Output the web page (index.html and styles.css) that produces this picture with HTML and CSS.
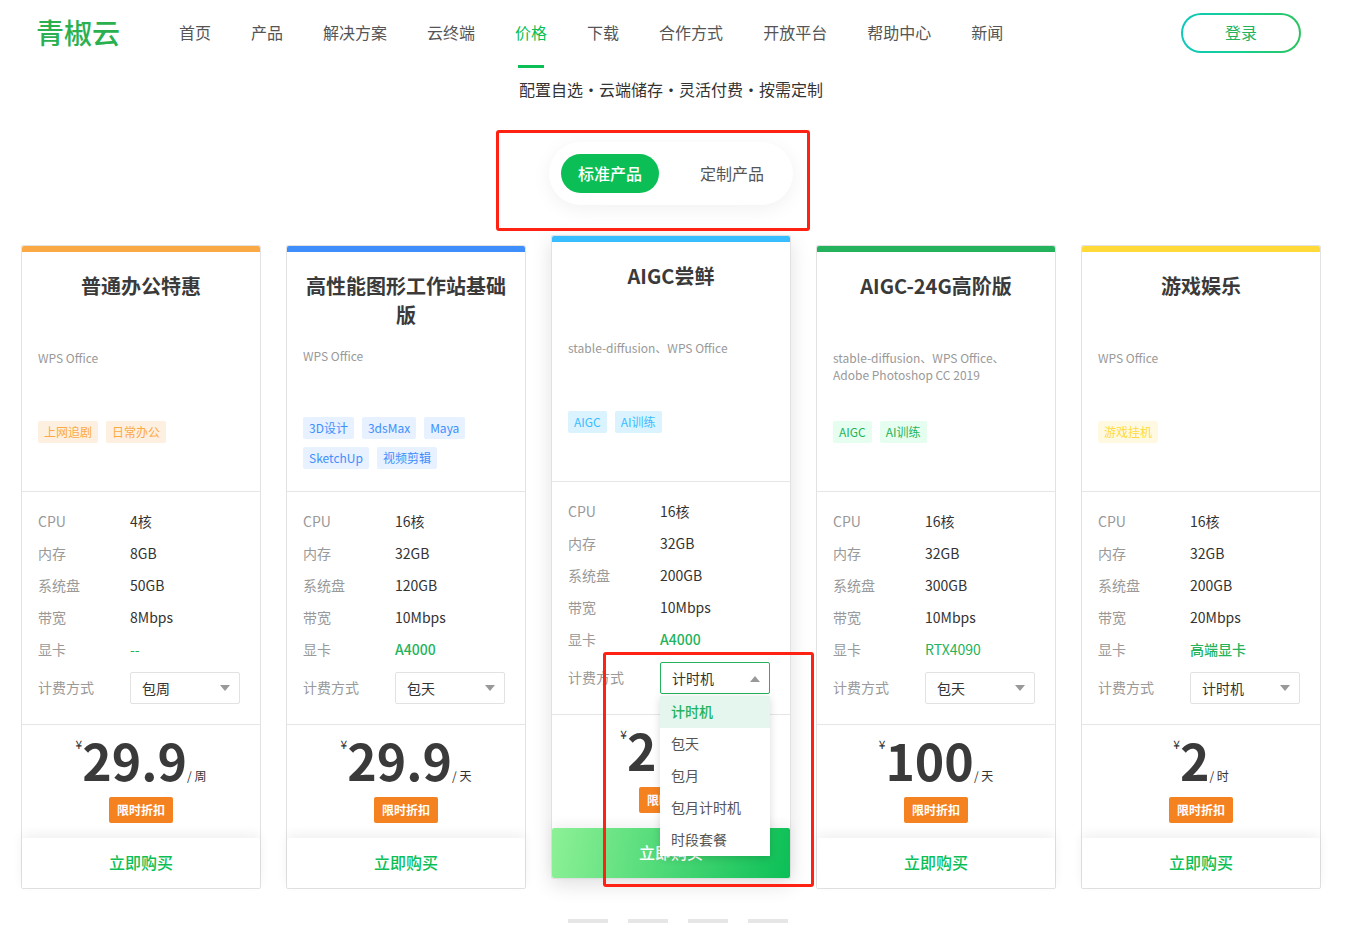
FILE: index.html
```html
<!DOCTYPE html>
<html lang="zh-CN">
<head>
<meta charset="utf-8">
<meta name="viewport" content="width=device-width, initial-scale=1">
<title>青椒云 - 价格</title>
<link rel="stylesheet" href="styles.css">
</head>
<body>
<header class="header">
  <a class="logo" href="#">青椒云</a>
  <nav class="nav">
    <a class="nav-link" href="#">首页</a>
    <a class="nav-link" href="#">产品</a>
    <a class="nav-link" href="#">解决方案</a>
    <a class="nav-link" href="#">云终端</a>
    <a class="nav-link nav-link--active" href="#">价格</a>
    <a class="nav-link" href="#">下载</a>
    <a class="nav-link" href="#">合作方式</a>
    <a class="nav-link" href="#">开放平台</a>
    <a class="nav-link" href="#">帮助中心</a>
    <a class="nav-link" href="#">新闻</a>
  </nav>
  <a class="login" href="#">登录</a>
</header>
<main class="main">
  <p class="subtitle">配置自选・云端储存・灵活付费・按需定制</p>
  <div class="switch-row">
    <div class="switch">
      <button class="switch-btn switch-btn--on" type="button">标准产品</button>
      <button class="switch-btn" type="button">定制产品</button>
      <span class="marker marker--switch"></span>
    </div>
  </div>

  <section class="cards">
    <article class="card card--orange">
      <div class="card-head">
        <h2 class="card-title">普通办公特惠</h2>
        <p class="card-desc">WPS Office</p>
        <div class="tags"><span class="tag">上网追剧</span><span class="tag">日常办公</span></div>
      </div>
      <div class="specs">
        <dl class="spec-list">
          <dt>CPU</dt><dd>4核</dd>
          <dt>内存</dt><dd>8GB</dd>
          <dt>系统盘</dt><dd>50GB</dd>
          <dt>带宽</dt><dd>8Mbps</dd>
          <dt>显卡</dt><dd class="gpu">--</dd>
        </dl>
        <div class="billing">
          <label class="billing-label" for="bill-1">计费方式</label>
          <div class="picker"><select class="picker-select" id="bill-1"><option>包周</option></select></div>
        </div>
      </div>
      <div class="price-box">
        <div class="price"><span class="currency">¥</span><strong class="amount">29.9</strong><span class="unit">/ 周</span></div>
        <span class="discount">限时折扣</span>
      </div>
      <button class="buy" type="button">立即购买</button>
    </article>

    <article class="card card--blue card--long">
      <div class="card-head">
        <h2 class="card-title">高性能图形工作站基础版</h2>
        <p class="card-desc">WPS Office</p>
        <div class="tags"><span class="tag">3D设计</span><span class="tag">3dsMax</span><span class="tag">Maya</span><span class="tag">SketchUp</span><span class="tag">视频剪辑</span></div>
      </div>
      <div class="specs">
        <dl class="spec-list">
          <dt>CPU</dt><dd>16核</dd>
          <dt>内存</dt><dd>32GB</dd>
          <dt>系统盘</dt><dd>120GB</dd>
          <dt>带宽</dt><dd>10Mbps</dd>
          <dt>显卡</dt><dd class="gpu gpu--strong">A4000</dd>
        </dl>
        <div class="billing">
          <label class="billing-label" for="bill-2">计费方式</label>
          <div class="picker"><select class="picker-select" id="bill-2"><option>包天</option></select></div>
        </div>
      </div>
      <div class="price-box">
        <div class="price"><span class="currency">¥</span><strong class="amount">29.9</strong><span class="unit">/ 天</span></div>
        <span class="discount">限时折扣</span>
      </div>
      <button class="buy" type="button">立即购买</button>
    </article>

    <article class="card card--sky card--raised">
      <div class="card-head">
        <h2 class="card-title">AIGC尝鲜</h2>
        <p class="card-desc">stable-diffusion、WPS Office</p>
        <div class="tags"><span class="tag">AIGC</span><span class="tag">AI训练</span></div>
      </div>
      <div class="specs">
        <dl class="spec-list">
          <dt>CPU</dt><dd>16核</dd>
          <dt>内存</dt><dd>32GB</dd>
          <dt>系统盘</dt><dd>200GB</dd>
          <dt>带宽</dt><dd>10Mbps</dd>
          <dt>显卡</dt><dd class="gpu gpu--strong">A4000</dd>
        </dl>
        <div class="billing">
          <label class="billing-label" for="bill-3">计费方式</label>
          <div class="picker picker--open">
            <select class="picker-select" id="bill-3"><option>计时机</option></select>
            <ul class="menu">
              <li class="menu-item menu-item--on">计时机</li>
              <li class="menu-item">包天</li>
              <li class="menu-item">包月</li>
              <li class="menu-item">包月计时机</li>
              <li class="menu-item">时段套餐</li>
            </ul>
          </div>
        </div>
      </div>
      <div class="price-box">
        <div class="price"><span class="currency">¥</span><strong class="amount">2.5</strong><span class="unit">/ 时</span></div>
        <span class="discount">限时折扣</span>
      </div>
      <button class="buy" type="button">立即购买</button>
      <span class="marker marker--menu"></span>
    </article>

    <article class="card card--green">
      <div class="card-head">
        <h2 class="card-title">AIGC-24G高阶版</h2>
        <p class="card-desc">stable-diffusion、WPS Office、Adobe Photoshop CC 2019</p>
        <div class="tags"><span class="tag">AIGC</span><span class="tag">AI训练</span></div>
      </div>
      <div class="specs">
        <dl class="spec-list">
          <dt>CPU</dt><dd>16核</dd>
          <dt>内存</dt><dd>32GB</dd>
          <dt>系统盘</dt><dd>300GB</dd>
          <dt>带宽</dt><dd>10Mbps</dd>
          <dt>显卡</dt><dd class="gpu">RTX4090</dd>
        </dl>
        <div class="billing">
          <label class="billing-label" for="bill-4">计费方式</label>
          <div class="picker"><select class="picker-select" id="bill-4"><option>包天</option></select></div>
        </div>
      </div>
      <div class="price-box">
        <div class="price"><span class="currency">¥</span><strong class="amount">100</strong><span class="unit">/ 天</span></div>
        <span class="discount">限时折扣</span>
      </div>
      <button class="buy" type="button">立即购买</button>
    </article>

    <article class="card card--yellow">
      <div class="card-head">
        <h2 class="card-title">游戏娱乐</h2>
        <p class="card-desc">WPS Office</p>
        <div class="tags"><span class="tag">游戏挂机</span></div>
      </div>
      <div class="specs">
        <dl class="spec-list">
          <dt>CPU</dt><dd>16核</dd>
          <dt>内存</dt><dd>32GB</dd>
          <dt>系统盘</dt><dd>200GB</dd>
          <dt>带宽</dt><dd>20Mbps</dd>
          <dt>显卡</dt><dd class="gpu gpu--strong">高端显卡</dd>
        </dl>
        <div class="billing">
          <label class="billing-label" for="bill-5">计费方式</label>
          <div class="picker"><select class="picker-select" id="bill-5"><option>计时机</option></select></div>
        </div>
      </div>
      <div class="price-box">
        <div class="price"><span class="currency">¥</span><strong class="amount">2</strong><span class="unit">/ 时</span></div>
        <span class="discount">限时折扣</span>
      </div>
      <button class="buy" type="button">立即购买</button>
    </article>
  </section>

  <div class="pager"><span class="dash"></span><span class="dash"></span><span class="dash"></span><span class="dash"></span></div>
</main>
</body>
</html>
```
FILE: styles.css
```css
* {
  box-sizing: border-box;
}

body {
  margin: 0;
  background: #fff;
  color: #333;
  font-family: "Noto Sans CJK SC", sans-serif;
  font-size: 14px;
}

h2, p, dl, dd, ul {
  margin: 0;
  padding: 0;
}

button, select {
  font-family: inherit;
  cursor: pointer;
}

a {
  text-decoration: none;
}

/* Header */
.header {
  display: flex;
  align-items: flex-start;
  height: 66px;
  padding: 0 45px 0 36px;
}

.logo {
  color: #2bb050;
  font-size: 28px;
  font-weight: 500;
  line-height: 64px;
}

.nav {
  display: flex;
  gap: 40px;
  margin-left: 59px;
}

.nav-link {
  position: relative;
  color: #555;
  font-size: 16px;
  line-height: 64px;
  white-space: nowrap;
}

.nav-link--active {
  color: #0bbf56;
}

.nav-link--active::after {
  content: "";
  position: absolute;
  left: 3px;
  right: 3px;
  bottom: -4px;
  height: 3px;
  background: #0bbf56;
}

.login {
  width: 120px;
  margin-top: 13px;
  margin-left: auto;
  padding-bottom: 2px;
  border: 2px solid transparent;
  border-radius: 20px;
  background: linear-gradient(#fff, #fff) padding-box,
    linear-gradient(90deg, #10c8bb, #16cf91 50%, #2bc35f) border-box;
  color: #24b35c;
  font-size: 16px;
  line-height: 34px;
  text-align: center;
}

/* Intro */
.main {
  padding: 11px 25px 15px 21px;
}

.subtitle {
  font-size: 16px;
  line-height: 24px;
  text-align: center;
}

.switch-row {
  display: flex;
  justify-content: center;
  padding: 41px 0 40px;
}

.switch {
  position: relative;
  display: flex;
  gap: 24px;
  padding: 12px;
  border-radius: 32px;
  background: #fff;
  box-shadow: 0 4px 20px rgba(0, 0, 0, 0.06);
}

.switch-btn {
  width: 98px;
  height: 39px;
  padding: 0 0 2px;
  border: 0;
  border-radius: 20px;
  background: none;
  color: #555;
  font-size: 16px;
}

.switch-btn--on {
  background: #0bbf56;
  color: #fff;
  font-weight: 500;
}

.marker {
  position: absolute;
  z-index: 3;
  border: 3px solid #ff2213;
  border-radius: 3px;
  pointer-events: none;
}

.marker--switch {
  top: -12px;
  right: -17px;
  bottom: -26px;
  left: -53px;
}

.marker--menu {
  top: 416px;
  right: -24px;
  bottom: -9px;
  left: 51px;
}

/* Cards */
.cards {
  display: grid;
  grid-template-columns: repeat(5, minmax(0, 1fr));
  gap: 25px;
}

.card {
  --accent: #fba944;
  --tint: #fef0e1;
  position: relative;
  display: flex;
  flex-direction: column;
  border: 1px solid #e2e2e2;
  border-radius: 2px;
  background: #fff;
}

.card--blue {
  --accent: #3e8ffc;
  --tint: #e7f1ff;
}

.card--sky {
  --accent: #38bdff;
  --tint: #daf3ff;
}

.card--green {
  --accent: #24b35c;
  --tint: #e5fef0;
}

.card--yellow {
  --accent: #ffda38;
  --tint: #fff9e2;
}

.card--raised {
  z-index: 2;
  margin: -10px 0 10px;
  box-shadow: 0 6px 20px rgba(0, 0, 0, 0.12);
}

.card-head {
  min-height: 246px;
  padding: 19px 16px;
  border-top: 6px solid var(--accent);
  border-bottom: 1px solid #e6e6e6;
  border-radius: 2px 2px 0 0;
}

.card-title {
  min-height: 58px;
  margin-bottom: 20px;
  color: #3a3a3a;
  font-size: 20px;
  font-weight: 700;
  line-height: 29px;
  text-align: center;
}

.card-desc {
  min-height: 72px;
  color: #999;
  font-size: 12px;
  line-height: 17px;
}

.card--long .card-title {
  margin-bottom: 18px;
}

.card--long .card-desc {
  min-height: 70px;
}

.tags {
  display: flex;
  flex-wrap: wrap;
  gap: 8px;
}

.tag {
  padding: 0 6px;
  border-radius: 2px;
  background: var(--tint);
  color: var(--accent);
  font-size: 12px;
  line-height: 22px;
}

.specs {
  padding: 13px 16px 20px;
  border-bottom: 1px solid #e6e6e6;
}

.spec-list {
  display: grid;
  grid-template-columns: 92px 1fr;
  line-height: 32px;
}

.spec-list dt,
.billing-label {
  color: #999;
}

.gpu {
  color: #24b35c;
}

.gpu--strong {
  font-weight: 500;
}

.billing {
  display: flex;
  margin-top: 7px;
  line-height: 30px;
}

.billing-label {
  width: 92px;
}

.picker {
  position: relative;
  width: 110px;
}

.picker::after {
  content: "";
  position: absolute;
  top: 13px;
  right: 10px;
  border: 5px solid transparent;
  border-top: 6px solid #999;
  border-bottom: 0;
  pointer-events: none;
}

.picker-select {
  display: block;
  width: 100%;
  height: 32px;
  padding: 0 11px;
  border: 1px solid #e2e2e2;
  border-radius: 2px;
  background: #fff;
  color: #333;
  font-size: 14px;
  appearance: none;
}

.picker--open .picker-select {
  border-color: #24b35c;
}

.picker--open::after {
  top: 14px;
  border-top: 0;
  border-bottom: 6px solid #999;
}

.menu {
  position: absolute;
  z-index: 2;
  top: 34px;
  left: 0;
  right: 0;
  background: #fff;
  box-shadow: 0 2px 8px rgba(0, 0, 0, 0.15);
  list-style: none;
}

.menu-item {
  padding: 0 11px 2px;
  color: #555;
  line-height: 30px;
}

.menu-item--on {
  background: #e5f6ee;
  color: #24b35c;
  font-weight: 500;
}

/* Price and purchase */
.price-box {
  display: flex;
  flex-direction: column;
  align-items: center;
  padding-bottom: 15px;
}

.price {
  display: flex;
  align-items: baseline;
  height: 72px;
  font-size: 12px;
  line-height: 20px;
}

.currency {
  align-self: flex-start;
  margin-top: 9px;
}

.amount {
  color: #3a3a3a;
  font-size: 50px;
  font-weight: 700;
  line-height: 68px;
}

.discount {
  padding: 0 8px;
  border-radius: 2px;
  background: #f58220;
  color: #fff;
  font-size: 12px;
  font-weight: 700;
  line-height: 26px;
}

.buy {
  height: 50px;
  padding: 0 0 2px;
  border: 0;
  border-radius: 2px;
  background: #fff;
  box-shadow: 0 -4px 12px rgba(0, 0, 0, 0.06);
  color: #0bbf56;
  font-size: 16px;
  font-weight: 500;
}

.card--raised .buy {
  background: linear-gradient(100deg, #8df196, #0bbf56);
  color: #fff;
}

/* Carousel position */
.pager {
  display: flex;
  justify-content: center;
  gap: 20px;
  padding: 30px 0 0 14px;
}

.dash {
  width: 40px;
  height: 4px;
  background: #e6e6e6;
}
```
